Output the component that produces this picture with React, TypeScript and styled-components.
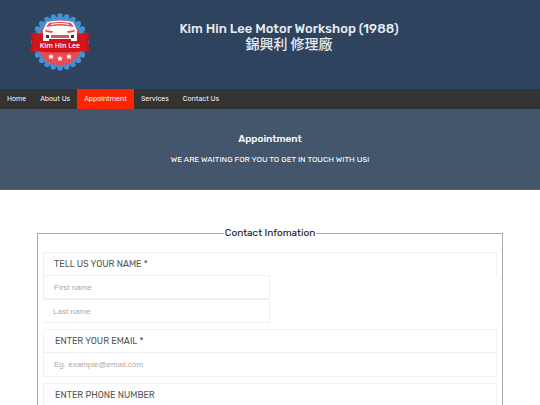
import React from "react";
import styled, { createGlobalStyle } from "styled-components";

const GlobalStyle = createGlobalStyle`
  * { box-sizing: border-box; }
  html { scrollbar-width: none; }
  body {
    margin: 0;
    background: #fff;
    color: #111;
    font-family: Rubik, Roboto, "Noto Sans CJK TC", sans-serif;
  }
`;

const Header = styled.header`
  display: grid;
  grid-template-columns: 120px 1fr 82px;
  align-items: start;
  height: 89px;
  background: #2e435e;
`;

const LogoLink = styled.a`
  display: block;
  padding: 13px 0 0 29px;
  line-height: 0;
`;

const SiteTitle = styled.h1`
  margin: 0;
  padding-top: 21px;
  color: #e6ebf0;
  font-size: 13px;
  font-weight: 500;
  line-height: 16px;
  text-align: center;
`;

const ChineseName = styled.span`
  display: block;
  font-size: 14px;
`;

const Nav = styled.nav`
  display: flex;
  height: 20px;
  background: #333;
`;

const NavLink = styled.a<{ $active?: boolean }>`
  padding: 0 7px;
  background: ${(p) => (p.$active ? "#ff2400" : "transparent")};
  color: #f2f2f2;
  font-size: 7px;
  line-height: 20px;
  text-decoration: none;
`;

const Banner = styled.section`
  height: 81px;
  padding-top: 23px;
  background: #44566c;
  border-bottom: 1px solid #59697b;
  color: #fff;
  text-align: center;
`;

const BannerTitle = styled.h2`
  margin: 0 0 8px;
  font-size: 10px;
  font-weight: 500;
  line-height: 14px;
`;

const BannerText = styled.p`
  margin: 0;
  font-size: 8px;
  font-weight: 400;
  line-height: 12px;
`;

const Form = styled.form`
  padding: 36px 37px;
`;

const Fieldset = styled.fieldset`
  margin: 0;
  padding: 12px 5px;
  border: 1px solid #aaa;
`;

const Legend = styled.legend`
  margin: 0 auto;
  padding: 0 1px;
  font-size: 10px;
  line-height: 14px;
`;

const Field = styled.div<{ $split?: boolean }>`
  margin-bottom: 6px;
  border: solid #f1f1f1;
  border-width: ${(p) => (p.$split ? "1px 0 0" : "1px")};
`;

const Label = styled.label<{ $edged?: boolean }>`
  display: block;
  padding: 0 ${(p) => (p.$edged ? "10px" : "11px")};
  border: solid #f1f1f1;
  border-width: ${(p) => (p.$edged ? "0 1px" : "0")};
  color: #555;
  font-size: 9px;
  line-height: 22px;
`;

const TextInput = styled.input<{ $half?: boolean; $openLeft?: boolean }>`
  display: block;
  width: ${(p) => (p.$half ? "50%" : "100%")};
  height: 24px;
  padding: 0 10px;
  border: solid #f0f0f0;
  border-width: ${(p) => (p.$half ? "1px" : "1px 0 0")};
  ${(p) => p.$openLeft && "border-left: 0;"}
  border-radius: 0;
  outline: 0;
  background: #fff;
  color: #444;
  font-family: "Liberation Sans", Arial, sans-serif;
  font-size: 8px;
  &::placeholder { color: #aaa; opacity: 1; }
`;

const links = ["Home", "About Us", "Appointment", "Services", "Contact Us"];

const scallops = Array.from({ length: 24 }, (_, i) => {
  const a = (i * Math.PI) / 12;
  return { x: 31 + 26 * Math.cos(a), y: 29 + 26 * Math.sin(a) };
});

const star = "M0-3 .9-1 3-.8 1.4.6 1.9 2.7 0 1.6-1.9 2.7-1.4.6-3-.8-.9-1Z";

function Logo() {
  return (
    <svg width="62" height="60" viewBox="0 0 62 60" role="img" aria-label="Kim Hin Lee">
      <circle cx="31" cy="29" r="25.5" fill="#4691d5" />
      {scallops.map((s, i) => <circle key={i} cx={s.x} cy={s.y} r="2.7" fill="#4691d5" />)}
      <circle cx="31" cy="30" r="22.5" fill="#e94b50" stroke="#8a6c96" strokeWidth=".6" />
      <path d="M1 20h8v18H1l2-9ZM61 20h-8v18h8l-2-9Z" fill="#c3151d" />
      <path d="M5 21Q31 18 57 21V38Q31 41 5 38Z" fill="#d4141d" />
      <path d="M15 15 18 9Q31 6 44 9l3 6 1 2v11h-6v-2H20v2h-6V17Z" fill="#fff" />
      <path d="M17 14 20 10Q31 8 42 10l3 4Q31 11 17 14Z" fill="#e94b50" />
      <path d="M22 11Q31 9 40 11V12Q31 10 22 12Z" fill="#fff" />
      <path d="M16 17l8 1-1 2-6-1ZM46 17l-8 1 1 2 6-1ZM22 22h18v3H22Z" fill="#d9555a" />
      <path d="M17 22h3v3h-3ZM42 22h3v3h-3Z" fill="#453238" />
      <text x="31" y="35" textAnchor="middle" fill="#fff" fontFamily="Open Sans, sans-serif" fontSize="7" fontWeight="600">
        Kim Hin Lee
      </text>
      <g fill="#fff">
        <path d={star} transform="translate(22 43.5)" />
        <path d={star} transform="translate(31 45.5)" />
        <path d={star} transform="translate(40 43.5)" />
      </g>
    </svg>
  );
}

export default function App() {
  return (
    <>
      <GlobalStyle />
      <Header>
        <LogoLink href="#home"><Logo /></LogoLink>
        <SiteTitle>
          Kim Hin Lee Motor Workshop (1988)
          <ChineseName lang="zh-Hant">錦興利 修理廠</ChineseName>
        </SiteTitle>
      </Header>
      <Nav>
        {links.map((name) => (
          <NavLink key={name} href="#" $active={name === "Appointment"}>{name}</NavLink>
        ))}
      </Nav>
      <main>
        <Banner>
          <BannerTitle>Appointment</BannerTitle>
          <BannerText>WE ARE WAITING FOR YOU TO GET IN TOUCH WITH US!</BannerText>
        </Banner>
        <Form>
          <Fieldset>
            <Legend>Contact Infomation</Legend>
            <Field $split>
              <Label htmlFor="first-name" $edged>TELL US YOUR NAME *</Label>
              <TextInput id="first-name" placeholder="First name" $half />
              <TextInput id="last-name" aria-label="Last name" placeholder="Last name" $half $openLeft />
            </Field>
            <Field>
              <Label htmlFor="email">ENTER YOUR EMAIL *</Label>
              <TextInput id="email" type="email" placeholder="Eg. example@email.com" />
            </Field>
            <Field>
              <Label htmlFor="phone">ENTER PHONE NUMBER</Label>
              <TextInput id="phone" type="tel" />
            </Field>
          </Fieldset>
        </Form>
      </main>
    </>
  );
}
